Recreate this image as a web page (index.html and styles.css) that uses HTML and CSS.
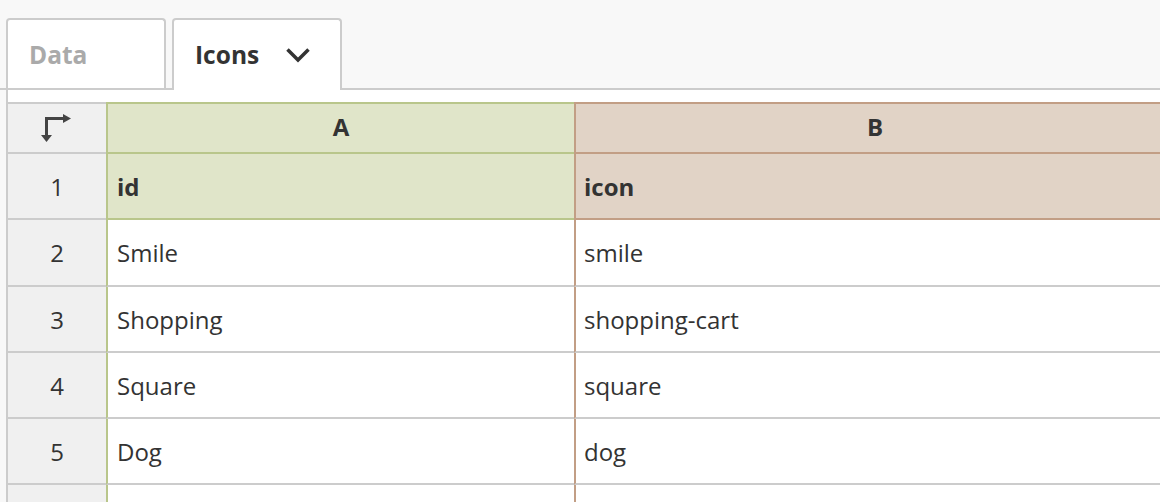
FILE: index.html
```html
<!DOCTYPE html>
<html>
<head>
<meta charset="utf-8">
<link rel="stylesheet" href="styles.css">
</head>
<body>
<div class="tabs">
  <div class="tab">Data</div>
  <div class="tab active">Icons
    <svg class="chev" width="24" height="16" viewBox="0 0 24 16"><path d="M1.5 2.5 L12 13 L22.5 2.5" fill="none" stroke="#333" stroke-width="3.5"/></svg>
  </div>
</div>
<div class="sheet">
  <div class="grid">
    <div class="cell rh head corner">
      <svg width="30" height="30" viewBox="0 0 30 30"><path d="M4 5.5 H22 M5.5 4 V23" stroke="#444" stroke-width="3" fill="none"/><polygon points="22,1 30,5.5 22,10" fill="#444"/><polygon points="0,22 11,22 5.5,29" fill="#444"/></svg>
    </div>
    <div class="cell ca head hl center bold">A</div>
    <div class="cell cb head hl center bold">B</div>

    <div class="cell rh">1</div>
    <div class="cell ca hl bold">id</div>
    <div class="cell cb hl bold">icon</div>

    <div class="cell rh">2</div>
    <div class="cell ca">Smile</div>
    <div class="cell cb">smile</div>

    <div class="cell rh">3</div>
    <div class="cell ca">Shopping</div>
    <div class="cell cb">shopping-cart</div>

    <div class="cell rh">4</div>
    <div class="cell ca">Square</div>
    <div class="cell cb">square</div>

    <div class="cell rh">5</div>
    <div class="cell ca">Dog</div>
    <div class="cell cb">dog</div>

    <div class="cell rh"></div>
    <div class="cell ca"></div>
    <div class="cell cb"></div>
  </div>
</div>
</body>
</html>
```
FILE: styles.css
```css
html, body {
  margin: 0;
  padding: 0;
  background: #f8f8f8;
  overflow: hidden;
  height: 100%;
}
body {
  font-family: "Open Sans", "Liberation Sans", sans-serif;
  color: #333;
}
.tabs {
  display: flex;
  gap: 6px;
  padding: 18px 0 0 6px;
  border-bottom: 2px solid #ccc;
  height: 70px;
}
.tab {
  box-sizing: border-box;
  width: 160px;
  height: 70px;
  background: #fff;
  border: 2px solid #ccc;
  border-bottom: none;
  border-radius: 4px 4px 0 0;
  font-weight: 700;
  font-size: 24.5px;
  color: #aaa;
  display: flex;
  align-items: center;
  padding-left: 21px;
}
.tab.active {
  width: 170px;
  height: 72px;
  margin-bottom: -2px;
  color: #333;
  padding-bottom: 2px;
}
.chev {
  margin-left: 27px;
  margin-top: 2px;
}
.sheet {
  margin-left: 6px;
  border-left: 2px solid #ccc;
  background: #fff;
  padding-top: 12px;
  height: 400px;
  overflow: hidden;
}
.grid {
  display: grid;
  grid-template-columns: 98px 468px 600px;
  grid-template-rows: 52px 66px 67px repeat(4, 66px);
  width: 1166px;
}
.cell {
  box-sizing: border-box;
  display: flex;
  align-items: center;
  font-size: 24px;
  border-bottom: 2px solid #ccc;
  padding-left: 9px;
  white-space: nowrap;
}
.rh {
  background: #f0f0f0;
  justify-content: center;
  padding-left: 0;
}
.head {
  border-top: 2px solid #ccc;
  padding-bottom: 4px;
}
.corner svg {
  display: block;
  margin-left: -3px;
  margin-top: 4px;
}
.ca {
  border-left: 2px solid #b9c68b;
}
.cb {
  border-left: 2px solid #c29e85;
  padding-left: 8px;
}
.ca.hl {
  background: #e0e5c9;
  border-bottom-color: #b9c68b;
}
.ca.head {
  border-top-color: #b9c68b;
}
.cb.hl {
  background: #e1d3c6;
  border-bottom-color: #c29e85;
}
.cb.head {
  border-top-color: #c29e85;
}
.center {
  justify-content: center;
  padding-left: 0;
}
.bold {
  font-weight: 700;
}
```
